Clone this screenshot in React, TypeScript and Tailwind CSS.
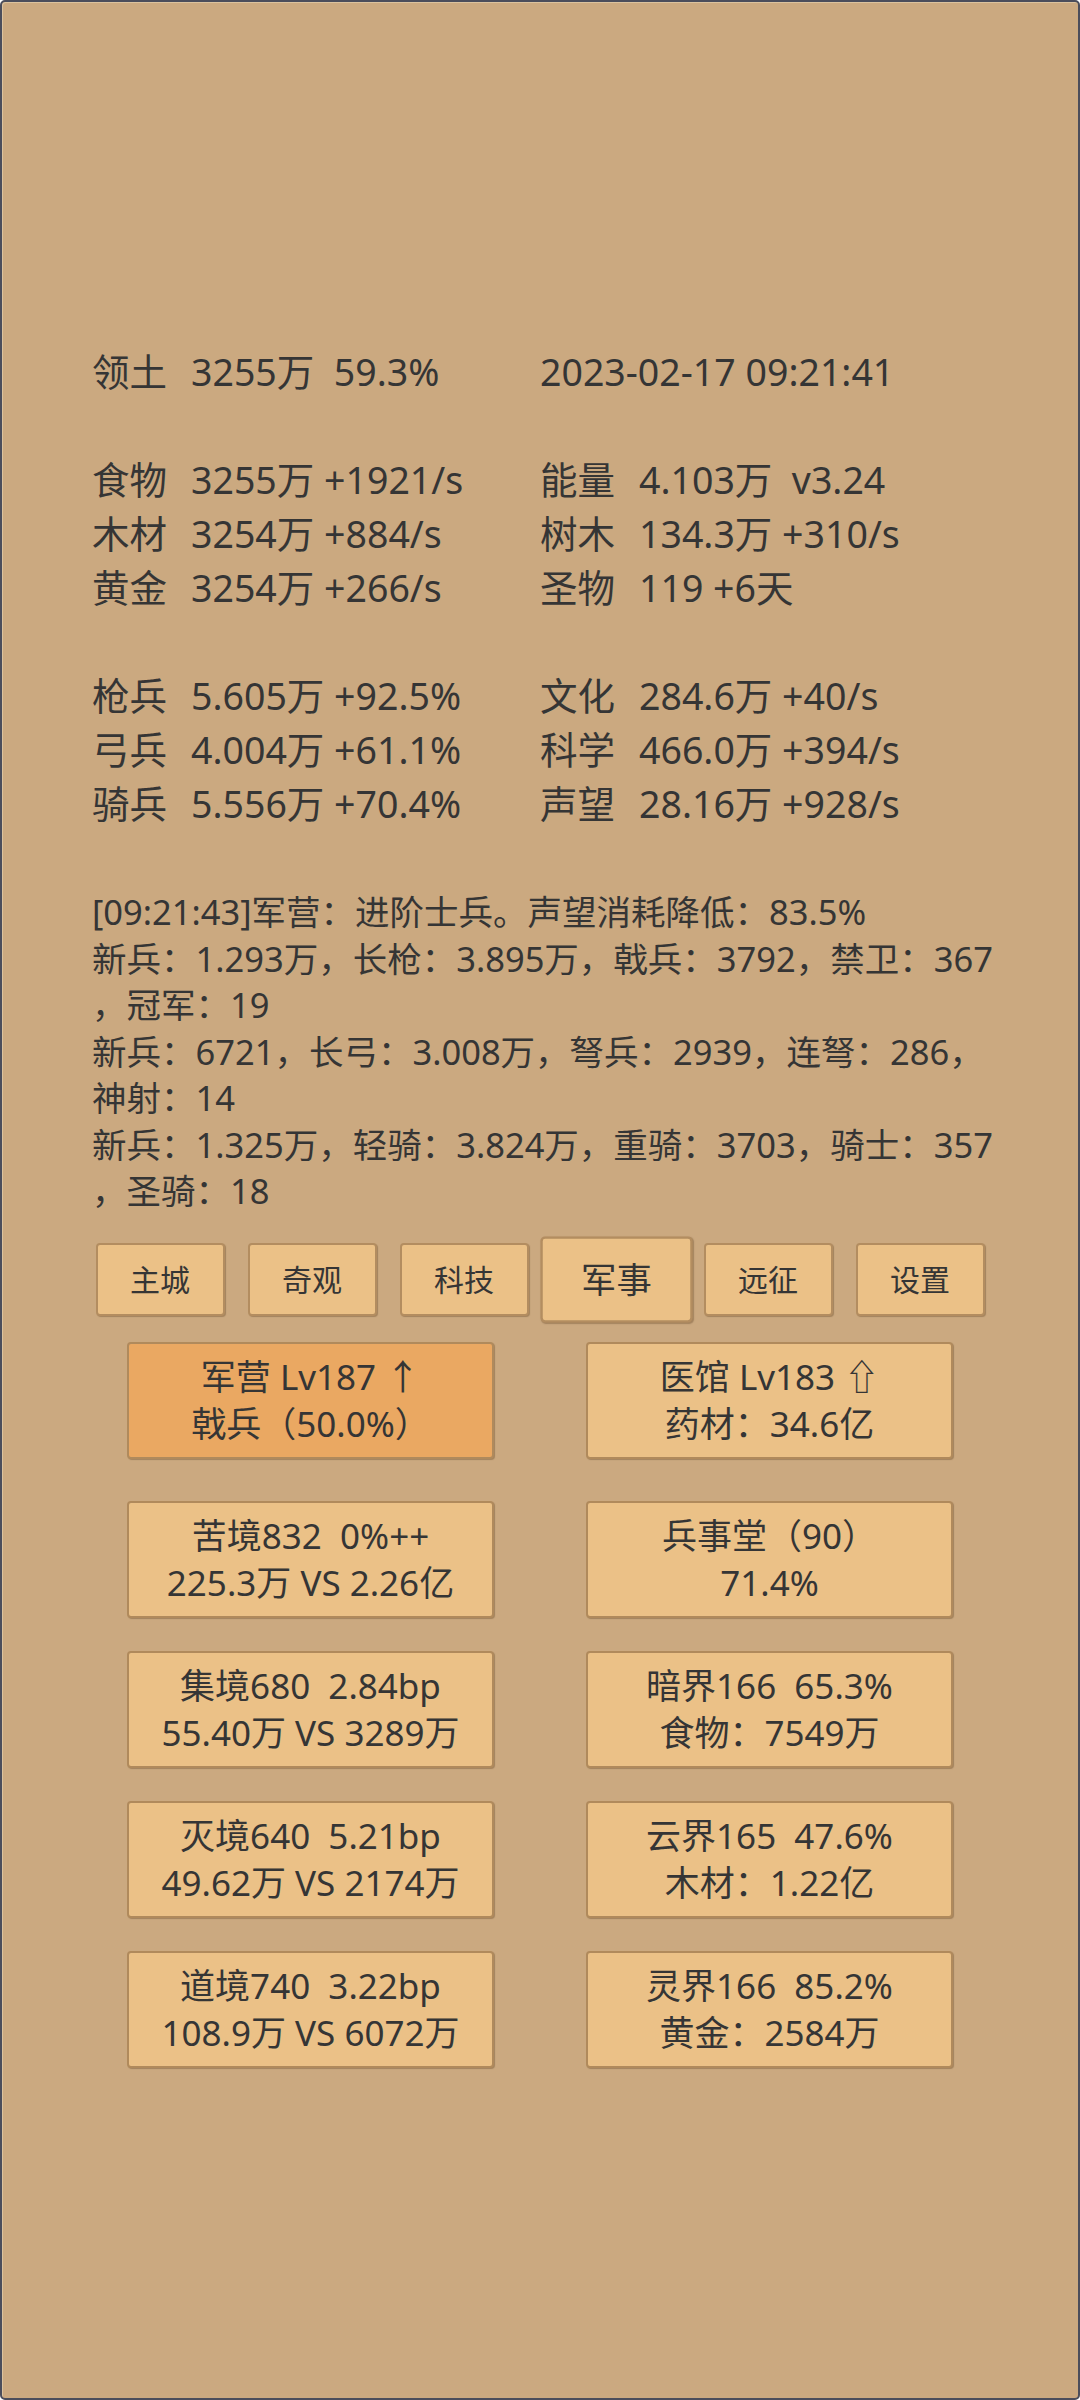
import React from "react";

const FONT = { fontFamily: '"Noto Sans", "Noto Sans CJK SC", sans-serif' };

type Stat = { label: string; value: string } | null;

const STATS: [Stat, Stat][] = [
  [{ label: "领土", value: "3255万  59.3%" }, { label: "", value: "2023-02-17 09:21:41" }],
  [null, null],
  [{ label: "食物", value: "3255万 +1921/s" }, { label: "能量", value: "4.103万  v3.24" }],
  [{ label: "木材", value: "3254万 +884/s" }, { label: "树木", value: "134.3万 +310/s" }],
  [{ label: "黄金", value: "3254万 +266/s" }, { label: "圣物", value: "119 +6天" }],
  [null, null],
  [{ label: "枪兵", value: "5.605万 +92.5%" }, { label: "文化", value: "284.6万 +40/s" }],
  [{ label: "弓兵", value: "4.004万 +61.1%" }, { label: "科学", value: "466.0万 +394/s" }],
  [{ label: "骑兵", value: "5.556万 +70.4%" }, { label: "声望", value: "28.16万 +928/s" }],
];

const LOG = [
  "[09:21:43]军营：进阶士兵。声望消耗降低：83.5%",
  "新兵：1.293万，长枪：3.895万，戟兵：3792，禁卫：367",
  "，冠军：19",
  "新兵：6721，长弓：3.008万，弩兵：2939，连弩：286，",
  "神射：14",
  "新兵：1.325万，轻骑：3.824万，重骑：3703，骑士：357",
  "，圣骑：18",
];

const TABS = ["主城", "奇观", "科技", "军事", "远征", "设置"];

const CARDS = [
  ["军营 Lv187 ↑", "戟兵（50.0%）"],
  ["医馆 Lv183 ⇧", "药材：34.6亿"],
  ["苦境832  0%++", "225.3万 VS 2.26亿"],
  ["兵事堂（90）", "71.4%"],
  ["集境680  2.84bp", "55.40万 VS 3289万"],
  ["暗界166  65.3%", "食物：7549万"],
  ["灭境640  5.21bp", "49.62万 VS 2174万"],
  ["云界165  47.6%", "木材：1.22亿"],
  ["道境740  3.22bp", "108.9万 VS 6072万"],
  ["灵界166  85.2%", "黄金：2584万"],
];

function StatCell({ stat }: { stat: Stat }) {
  if (!stat) return <div className="h-[54px]" />;
  return (
    <div className="h-[54px] leading-[54px] whitespace-pre">
      {stat.label && <span className="mr-[24px]">{stat.label}</span>}
      <span>{stat.value}</span>
    </div>
  );
}

export default function App() {
  return (
    <div
      style={FONT}
      className="w-[1080px] h-[2400px] bg-[#cba980] border-2 border-[#4b4d5b] rounded-[5px] shadow-[inset_1px_1px_0_#dcc39e] text-[#353535] overflow-hidden"
    >
      <div className="pt-[343px] px-[90px]">
        <div className="grid grid-cols-[448px_1fr] text-[37.5px]">
          {STATS.map(([l, r], i) => (
            <React.Fragment key={i}>
              <StatCell stat={l} />
              <StatCell stat={r} />
            </React.Fragment>
          ))}
        </div>

        <div className="mt-[58px] text-[34.5px] leading-[46.5px]">
          {LOG.map((line, i) => (
            <div key={i} className="whitespace-nowrap">
              {line}
            </div>
          ))}
        </div>
      </div>

      <div className="mt-[28px] flex justify-center gap-[23px]">
        {TABS.map((t) => (
          <button
            key={t}
            className={`w-[129px] h-[73px] flex items-center justify-center text-[30px] bg-[#ebc187] border-2 border-[#b38d60] rounded-[4px] shadow-[1px_1px_1px_rgba(90,60,30,0.35)] text-[#353535] ${
              t === "军事" ? "scale-[1.18]" : ""
            }`}
          >
            {t}
          </button>
        ))}
      </div>

      <div className="mt-[26px] grid grid-cols-[367px_367px] justify-center gap-x-[92px]">
        {CARDS.map(([a, b], i) => (
          <div
            key={i}
            className={`h-[117px] flex flex-col items-center justify-center text-[35px] leading-[47px] whitespace-pre border-2 border-[#b08a5c] rounded-[4px] shadow-[1px_1px_1px_rgba(90,60,30,0.35)] ${
              i === 0 ? "bg-[#eaa862]" : "bg-[#ebc187]"
            } ${i < 2 ? "mb-[42px]" : i < 8 ? "mb-[33px]" : ""}`}
          >
            <div>{a}</div>
            <div>{b}</div>
          </div>
        ))}
      </div>
    </div>
  );
}
